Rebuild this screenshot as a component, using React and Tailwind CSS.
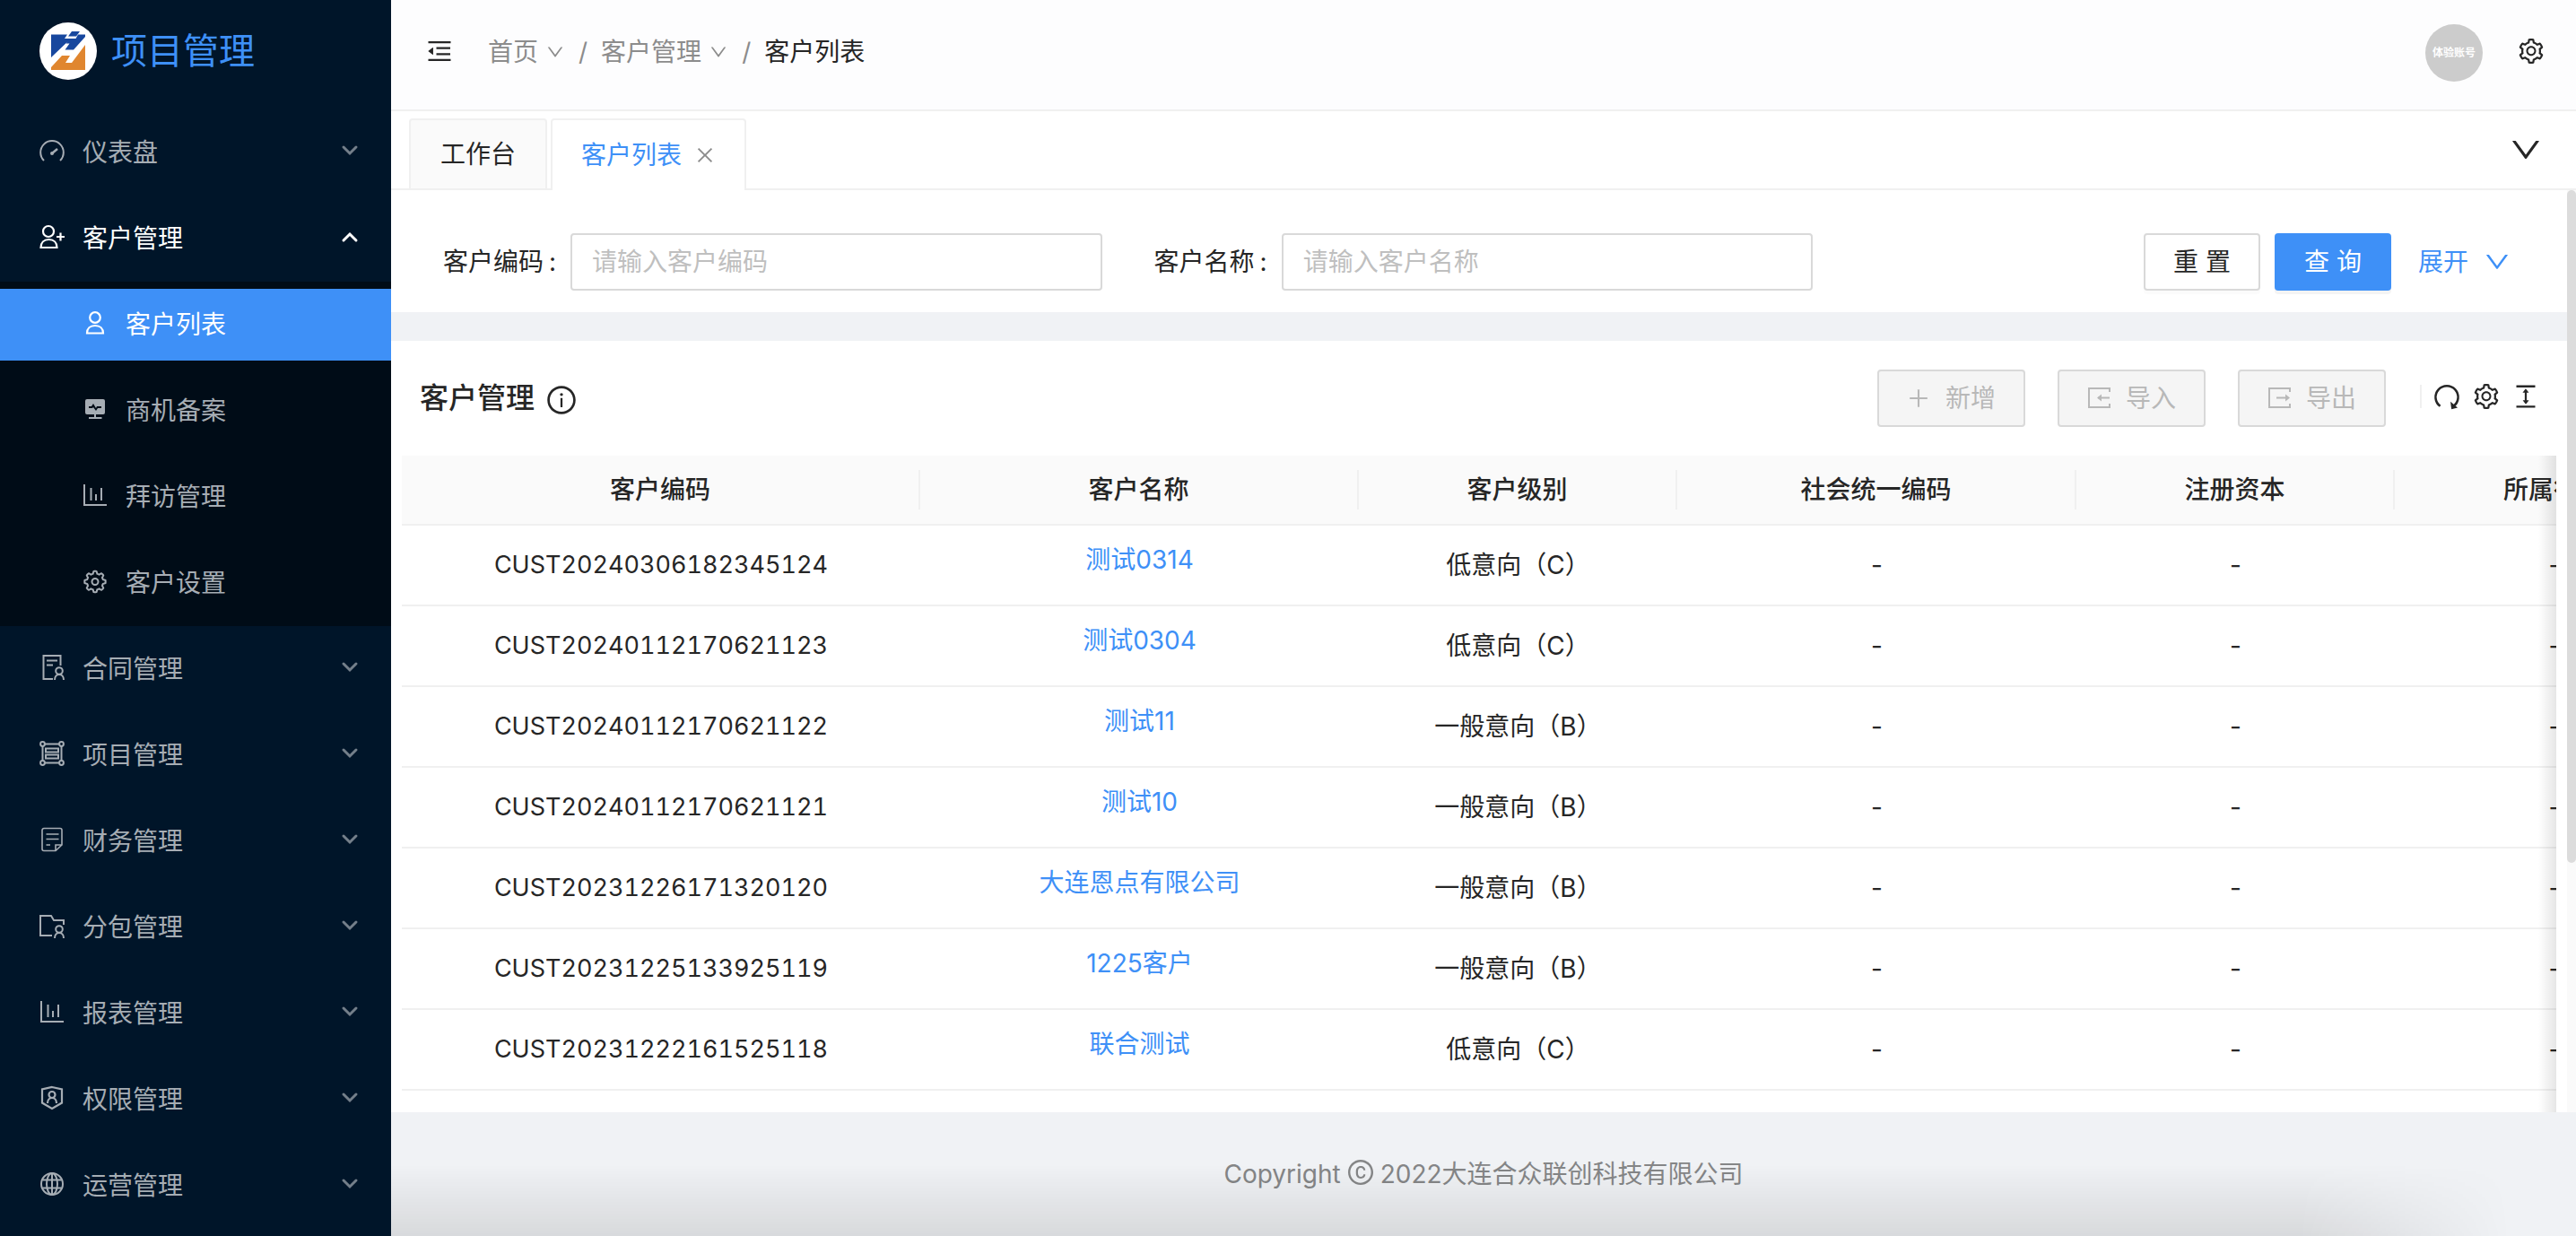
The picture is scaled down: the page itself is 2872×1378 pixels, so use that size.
import {
  AiOutlineClose,
  AiOutlineColumnHeight,
  AiOutlineCopyright,
  AiOutlineDown,
  AiOutlineInfoCircle,
  AiOutlineMenuFold,
  AiOutlinePlus,
  AiOutlineSetting,
} from "react-icons/ai";

const LogoMark = () => (
  <svg viewBox="0 0 64 64" className="size-16 shrink-0" aria-hidden="true">
    <circle cx="32" cy="32" r="32" fill="#fff" />
    <path d="M13 13.500h18l-3 4.500h7L13 39z" fill="#17479e" />
    <path d="M36 10h9l-4 5.500h-9z" fill="#17479e" />
    <path d="M43 13.500h8V16L38 30.500h-9.500l5-7h-4l4-5.500h7z" fill="#17479e" />
    <path d="M51 25v28H13v-3l12-13h9l-5 8h7z" fill="#e0862f" />
  </svg>
);

const LineIcon = ({ children, strokeWidth = 2 }) => (
  <svg
    viewBox="0 0 28 28"
    fill="none"
    stroke="currentColor"
    strokeWidth={strokeWidth}
    aria-hidden="true"
  >
    {children}
  </svg>
);

const GaugeIcon = () => (
  <LineIcon>
    <path d="M5 25A12.800 12.800 0 1 1 23 25" />
    <path d="m14 17 6-5" strokeWidth="2.500" />
    <circle cx="14" cy="17" r="1" />
  </LineIcon>
);

const UserAddIcon = () => (
  <LineIcon strokeWidth={2.2}>
    <circle cx="10" cy="8" r="6" />
    <path d="M1.500 26c0-5.500 3.500-9 9-9s9 3.500 9 9zM23.500 9.500v9M19 14h9" />
  </LineIcon>
);

const UserIcon = () => (
  <LineIcon strokeWidth={2.2}>
    <circle cx="14" cy="8" r="5.800" />
    <path d="M5 25.500c0-5 3.500-8.500 9-8.500s9 3.500 9 8.500z" />
  </LineIcon>
);

const ScreenIcon = () => (
  <LineIcon>
    <path
      fill="currentColor"
      fillRule="evenodd"
      stroke="none"
      d="M5 3h18a2 2 0 0 1 2 2v13a2 2 0 0 1-2 2H5a2 2 0 0 1-2-2V5a2 2 0 0 1 2-2zM7 11v2h4l1-1 3 4 2-3h4v-2h-5l-1 2-3-5-2 3z"
    />
    <path d="M14 20v4M7 24h14.500" />
  </LineIcon>
);

const ChartIcon = () => (
  <LineIcon>
    <path d="M2 2v23h25M9.500 6v14M15 13v7M21 6v14" />
  </LineIcon>
);

// eight-tooth outline traced around the centre of the 28px box
const gearPoints = Array.from({ length: 96 }, (_, i) => {
  const angle = (i / 96) * Math.PI * 2;
  const tooth = Math.max(-1, Math.min(1, Math.cos(angle * 8) * 2));
  const radius = 10.4 + tooth * 1.3;
  return `${14 + radius * Math.cos(angle)},${14.5 + radius * Math.sin(angle)}`;
}).join(" ");

const GearIcon = () => (
  <LineIcon>
    <polygon points={gearPoints} strokeLinejoin="round" />
    <circle cx="14" cy="14.500" r="3.500" />
  </LineIcon>
);

const ContractIcon = () => (
  <LineIcon>
    <path d="M15 27H4.500V1h19v11M8 6.500h12M8 11.500h7" />
    <circle cx="22" cy="18" r="3.800" />
    <path d="M17 28c0-3.500 2-6 5-6s5 2.500 5 6" />
  </LineIcon>
);

const ProjectIcon = () => (
  <LineIcon>
    <path d="M6 3.500h16M6 24.500h16M3.500 6v16M24.500 6v16M7 8.500h14v4H7zM7 15.500h14v4H7z" />
    <circle cx="3.500" cy="3.500" r="2.400" />
    <circle cx="24.500" cy="3.500" r="2.400" />
    <circle cx="3.500" cy="24.500" r="2.400" />
    <circle cx="24.500" cy="24.500" r="2.400" />
  </LineIcon>
);

const FinanceIcon = () => (
  <LineIcon strokeWidth={1.6}>
    <path d="M18 26.500H5a2 2 0 0 1-2-2v-21a2 2 0 0 1 2-2h18a2 2 0 0 1 2 2V20zM18 26.500V20h7M7.500 8h14M7.500 13.500h14M7.500 20H12" />
  </LineIcon>
);

const FolderUserIcon = () => (
  <LineIcon>
    <path d="M14 25H1V3h12l3 5h11v5" />
    <circle cx="22" cy="18" r="3.800" />
    <path d="M17 28c0-3.500 2-6 5-6s5 2.500 5 6" />
  </LineIcon>
);

const ShieldIcon = () => (
  <LineIcon strokeWidth={2.2}>
    <path d="M14 2 25 4.500v15L14 26 3 19.500v-15z" />
    <circle cx="14" cy="10.500" r="3.500" />
    <path d="M9 20c0-3.500 2-6 5-6s5 2.500 5 6" />
  </LineIcon>
);

const GlobeIcon = () => (
  <LineIcon>
    <circle cx="14" cy="14" r="12" />
    <ellipse cx="14" cy="14" rx="6" ry="12" />
    <path d="M14 2v24M3.500 9.500h21M3.500 18.500h21" />
  </LineIcon>
);

const ImportIcon = () => (
  <LineIcon>
    <path d="M26 7V3H3v21h23v-4M26 13.500H13" />
    <path d="m17 9.500-5 4 5 4z" fill="currentColor" stroke="none" />
  </LineIcon>
);

const ExportIcon = () => (
  <LineIcon>
    <path d="M26 7V3H3v21h23v-4M11 13.500h13" />
    <path d="m21 9.500 5 4-5 4z" fill="currentColor" stroke="none" />
  </LineIcon>
);

const ReloadIcon = () => (
  <LineIcon strokeWidth={2.2}>
    <path d="M7.500 23.500A11 11 0 1 1 20.500 23.500" />
    <path d="m17.500 19 1 7.500 6-1.500z" fill="currentColor" stroke="none" />
  </LineIcon>
);

const Caret = ({ open }) => (
  <svg
    viewBox="0 0 20 20"
    className={`mb-1 ml-auto size-5 ${open ? "rotate-180" : "opacity-70"}`}
    fill="none"
    stroke="currentColor"
    strokeWidth="3"
    strokeLinecap="round"
    aria-hidden="true"
  >
    <path d="m3 6 7 7 7-7" />
  </svg>
);

const menu = [
  { label: "仪表盘", icon: <GaugeIcon /> },
  {
    label: "客户管理",
    icon: <UserAddIcon />,
    children: [
      { label: "客户列表", icon: <UserIcon />, active: true },
      { label: "商机备案", icon: <ScreenIcon /> },
      { label: "拜访管理", icon: <ChartIcon /> },
      { label: "客户设置", icon: <GearIcon /> },
    ],
  },
  { label: "合同管理", icon: <ContractIcon /> },
  { label: "项目管理", icon: <ProjectIcon /> },
  { label: "财务管理", icon: <FinanceIcon /> },
  { label: "分包管理", icon: <FolderUserIcon /> },
  { label: "报表管理", icon: <ChartIcon /> },
  { label: "权限管理", icon: <ShieldIcon /> },
  { label: "运营管理", icon: <GlobeIcon /> },
];

const filters = [
  { id: "code", label: "客户编码", placeholder: "请输入客户编码" },
  { id: "name", label: "客户名称", placeholder: "请输入客户名称" },
];

const actions = [
  { label: "新增", icon: <AiOutlinePlus /> },
  { label: "导入", icon: <ImportIcon /> },
  { label: "导出", icon: <ExportIcon /> },
];

const columns = [
  { title: "客户编码", width: "w-[578px]" },
  { title: "客户名称", width: "w-[489px]" },
  { title: "客户级别", width: "w-[355px]" },
  { title: "社会统一编码", width: "w-[445px]" },
  { title: "注册资本", width: "w-[355px]" },
  { title: "所属行业", width: "w-[356px]" },
];

const rows = [
  ["CUST20240306182345124", "测试0314", "低意向（C）"],
  ["CUST20240112170621123", "测试0304", "低意向（C）"],
  ["CUST20240112170621122", "测试11", "一般意向（B）"],
  ["CUST20240112170621121", "测试10", "一般意向（B）"],
  ["CUST20231226171320120", "大连恩点有限公司", "一般意向（B）"],
  ["CUST20231225133925119", "1225客户", "一般意向（B）"],
  ["CUST20231222161525118", "联合测试", "低意向（C）"],
];

const Sidebar = () => (
  <aside className="w-[436px] shrink-0 overflow-hidden bg-[#001529] text-[#a6adb4]">
    <a
      href="#home"
      className="flex h-[122px] items-center gap-4 pb-2 pl-11 text-[40px] text-[#3e90f7]"
    >
      <LogoMark />
      项目管理
    </a>
    <nav>
      {menu.map((item) => (
        <div key={item.label}>
          <button
            aria-expanded={!!item.children}
            className={`flex h-24 w-full items-center gap-5 pr-9 pl-11 ${item.children ? "text-white" : ""}`}
          >
            <span className="pb-1 [&>svg]:size-7">{item.icon}</span>
            {item.label}
            <Caret open={item.children} />
          </button>
          {item.children && (
            <div className="bg-[#000c17] py-2">
              {item.children.map((child) => (
                <a
                  key={child.label}
                  href="#page"
                  className={`mb-4 flex h-20 items-center gap-5 pl-[92px] last:mb-0 ${child.active ? "bg-[#3e90f7] text-white" : ""}`}
                >
                  <span className="pb-1 [&>svg]:size-7">{child.icon}</span>
                  {child.label}
                </a>
              ))}
            </div>
          )}
        </div>
      ))}
    </nav>
  </aside>
);

const Header = () => (
  <header className="flex h-[124px] shrink-0 items-center border-b-2 border-[#f0f0f0] bg-[#fdfdfe] pr-[34px] pl-[38px]">
    <button aria-label="收起菜单" className="mb-2">
      <AiOutlineMenuFold className="size-8" />
    </button>
    <nav className="ml-[38px] flex items-center pb-1.5 text-[#8c8c8c]">
      <a href="#home" className="flex items-center gap-2">
        首页
        <AiOutlineDown className="size-[22px]" />
      </a>
      <span className="mx-[15px]">/</span>
      <a href="#customer" className="flex items-center gap-2">
        客户管理
        <AiOutlineDown className="size-[22px]" />
      </a>
      <span className="mx-[15px]">/</span>
      <span className="text-[#262626]">客户列表</span>
    </nav>
    <button className="mr-[38px] mb-1 ml-auto size-16 rounded-full bg-[#ccc] text-xs font-bold text-white">
      体验账号
    </button>
    <button aria-label="设置" className="mb-2">
      <AiOutlineSetting className="size-8" />
    </button>
  </header>
);

const TabBar = () => (
  <div className="flex h-[88px] shrink-0 items-end bg-white">
    <span className="h-full w-5 border-b-2 border-[#f0f0f0]" />
    <button className="h-20 w-[154px] rounded-t-sm border-2 border-[#f0f0f0] bg-[#fafafa]">
      工作台
    </button>
    <span className="h-full w-1 border-b-2 border-[#f0f0f0]" />
    <div className="flex h-20 items-center gap-3.5 rounded-t-sm border-2 border-b-0 border-[#f0f0f0] px-8">
      <button className="text-[#3e90f7]">客户列表</button>
      <button aria-label="关闭" className="text-[#8c8c8c]">
        <AiOutlineClose className="size-6" />
      </button>
    </div>
    <div className="flex h-full flex-1 items-center justify-end border-b-2 border-[#f0f0f0] pr-9">
      <button aria-label="更多标签">
        <AiOutlineDown className="size-10" />
      </button>
    </div>
  </div>
);

const SearchForm = () => (
  <form className="grid grid-cols-3 gap-12 bg-white px-12 pt-12 pb-6">
    {filters.map((filter) => (
      <div key={filter.id} className="flex items-center">
        <label
          htmlFor={filter.id}
          className="flex w-[152px] shrink-0 justify-end"
        >
          {filter.label}
          <span className="mr-4 ml-1.5">:</span>
        </label>
        <input
          id={filter.id}
          placeholder={filter.placeholder}
          className="h-16 w-full min-w-0 rounded border-2 border-[#d9d9d9] px-[22px] outline-none placeholder:text-[#bfbfbf]"
        />
      </div>
    ))}
    <div className="flex items-center justify-end gap-4">
      <button
        type="reset"
        className="h-16 w-[130px] rounded border-2 border-[#d9d9d9] shadow-[0_4px_0_rgba(0,0,0,0.016)]"
      >
        重 置
      </button>
      <button
        type="button"
        className="h-16 w-[130px] rounded bg-[#3e90f7] text-white shadow-[0_4px_0_rgba(0,0,0,0.043)]"
      >
        查 询
      </button>
      <button
        type="button"
        className="mr-3.5 ml-3.5 flex items-center gap-4 text-[#3e90f7]"
      >
        展开
        <AiOutlineDown className="size-8" />
      </button>
    </div>
  </form>
);

const CustomerTable = () => (
  <section className="mt-8 flex min-h-0 flex-1 flex-col bg-white">
    <div className="flex h-32 shrink-0 items-center px-[30px]">
      <h2 className="ml-0.5 text-[32px] font-medium">客户管理</h2>
      <AiOutlineInfoCircle className="mt-1 ml-3 size-9" />
      <div className="ml-auto flex items-center gap-9">
        {actions.map((action) => (
          <button
            key={action.label}
            disabled
            className="flex h-16 w-[165px] items-center gap-4 rounded border-2 border-[#d9d9d9] bg-[#f5f5f5] pl-[30px] text-[#b8b8b8] [&>svg]:size-7"
          >
            {action.icon}
            {action.label}
          </button>
        ))}
      </div>
      <div className="ml-[38px] flex items-center gap-3 pb-1 [&_svg]:size-8">
        <span className="h-[26px] w-0.5 bg-[#f0f0f0]" />
        <button aria-label="刷新">
          <ReloadIcon />
        </button>
        <button aria-label="列设置">
          <AiOutlineSetting />
        </button>
        <button aria-label="密度">
          <AiOutlineColumnHeight />
        </button>
      </div>
    </div>
    <div className="relative mx-3 min-h-0 flex-1 overflow-hidden">
      <table className="w-[2578px] table-fixed border-separate border-spacing-0 text-center">
        <thead className="bg-[#fafafa]">
          <tr>
            {columns.map((column) => (
              <th
                key={column.title}
                className={`h-[78px] border-b-2 border-[#f0f0f0] p-0 font-medium ${column.width}`}
              >
                <div className="border-r-2 border-[#f0f0f0]">
                  {column.title}
                </div>
              </th>
            ))}
          </tr>
        </thead>
        <tbody className="[&_td]:h-[90px] [&_td]:border-b-2 [&_td]:border-[#f0f0f0] [&_td]:p-0">
          {rows.map(([code, name, level]) => (
            <tr key={code}>
              <td className="text-[27px] tabular-nums">{code}</td>
              <td>
                <a href="#detail" className="block pb-3 text-[#3e90f7]">
                  {name}
                </a>
              </td>
              <td>{level}</td>
              <td>-</td>
              <td>-</td>
              <td>-</td>
            </tr>
          ))}
        </tbody>
      </table>
      <div className="absolute inset-y-0 right-0 w-5 bg-linear-to-l from-black/10 to-transparent" />
    </div>
  </section>
);

export default function App() {
  return (
    <div className="flex h-screen overflow-hidden bg-[#f0f2f5] font-['Inter','Noto_Sans_CJK_SC',sans-serif] text-[28px] leading-[44px] text-[#262626]">
      <Sidebar />
      <div className="flex min-w-0 flex-1 flex-col">
        <Header />
        <TabBar />
        <main className="flex min-h-0 flex-1">
          <div className="flex min-w-0 flex-1 flex-col">
            <SearchForm />
            <CustomerTable />
          </div>
          <div className="w-2.5 bg-[#fafafa]">
            <div className="h-[73%] rounded-full bg-[#dcdcdc]" />
          </div>
        </main>
        <footer className="relative flex h-[138px] shrink-0 items-center justify-center gap-1.5 text-[#858687]">
          <div className="absolute bottom-0 left-0 h-20 w-[97%] bg-linear-to-t from-black/10 to-transparent mask-r-from-90%" />
          Copyright
          <AiOutlineCopyright className="mb-1 size-8" />
          2022大连合众联创科技有限公司
        </footer>
      </div>
    </div>
  );
}
